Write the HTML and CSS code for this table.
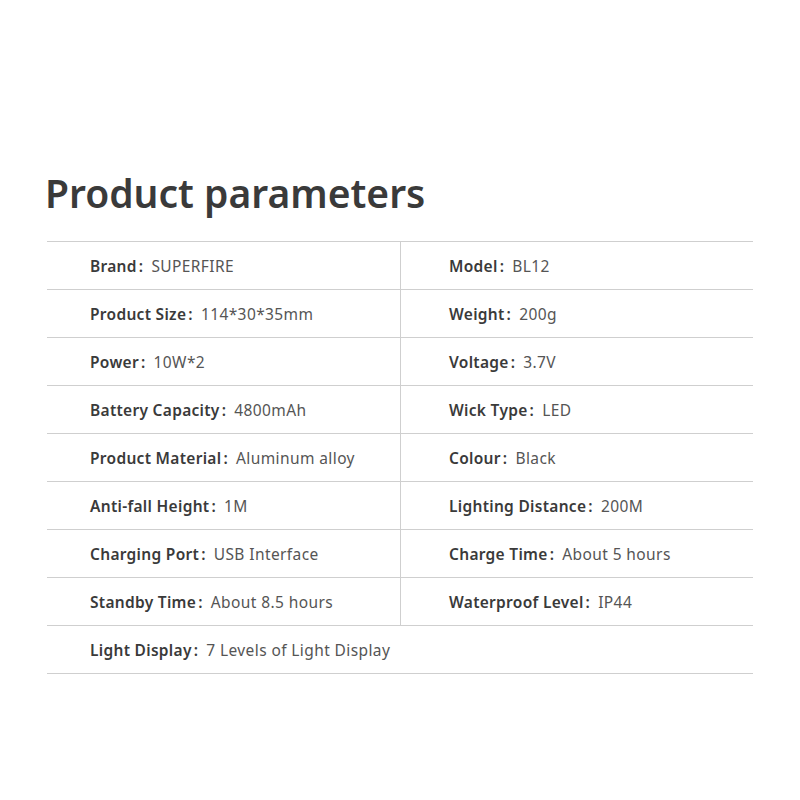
FILE: index.html
```html
<!DOCTYPE html>
<html>
<head>
<meta charset="utf-8">
<link rel="stylesheet" href="styles.css">
</head>
<body>
<div class="page">
  <h1 class="title">Product parameters</h1>
  <div class="table">
    <div class="row">
      <div class="cell"><span class="k">Brand<span class="c">:</span></span><span class="v">SUPERFIRE</span></div>
      <div class="cell right"><span class="k">Model<span class="c">:</span></span><span class="v">BL12</span></div>
    </div>
    <div class="row">
      <div class="cell"><span class="k">Product Size<span class="c">:</span></span><span class="v">114*30*35mm</span></div>
      <div class="cell right"><span class="k">Weight<span class="c">:</span></span><span class="v">200g</span></div>
    </div>
    <div class="row">
      <div class="cell"><span class="k">Power<span class="c">:</span></span><span class="v">10W*2</span></div>
      <div class="cell right"><span class="k">Voltage<span class="c">:</span></span><span class="v">3.7V</span></div>
    </div>
    <div class="row">
      <div class="cell"><span class="k">Battery Capacity<span class="c">:</span></span><span class="v">4800mAh</span></div>
      <div class="cell right"><span class="k">Wick Type<span class="c">:</span></span><span class="v">LED</span></div>
    </div>
    <div class="row">
      <div class="cell"><span class="k">Product Material<span class="c">:</span></span><span class="v">Aluminum alloy</span></div>
      <div class="cell right"><span class="k">Colour<span class="c">:</span></span><span class="v">Black</span></div>
    </div>
    <div class="row">
      <div class="cell"><span class="k">Anti-fall Height<span class="c">:</span></span><span class="v">1M</span></div>
      <div class="cell right"><span class="k">Lighting Distance<span class="c">:</span></span><span class="v">200M</span></div>
    </div>
    <div class="row">
      <div class="cell"><span class="k">Charging Port<span class="c">:</span></span><span class="v">USB Interface</span></div>
      <div class="cell right"><span class="k">Charge Time<span class="c">:</span></span><span class="v">About 5 hours</span></div>
    </div>
    <div class="row">
      <div class="cell"><span class="k">Standby Time<span class="c">:</span></span><span class="v">About 8.5 hours</span></div>
      <div class="cell right"><span class="k">Waterproof Level<span class="c">:</span></span><span class="v">IP44</span></div>
    </div>
    <div class="row single">
      <div class="cell"><span class="k">Light Display<span class="c">:</span></span><span class="v">7 Levels of Light Display</span></div>
    </div>
  </div>
</div>
</body>
</html>
```

FILE: styles.css
```css
html, body {
  margin: 0;
  padding: 0;
  background: #ffffff;
}
.page {
  width: 800px;
  height: 800px;
  padding: 165px 47px 0 47px;
  box-sizing: border-box;
  font-family: "Noto Sans", "Open Sans", sans-serif;
}
.title {
  margin: 0 0 20px -2px;
  font-size: 39px;
  line-height: 56px;
  font-weight: 600;
  color: #3a3a3a;
  letter-spacing: 0;
}
.table {
  border-top: 1px solid #cfcfcf;
}
.row {
  display: grid;
  grid-template-columns: 353px 1fr;
  height: 48px;
  border-bottom: 1px solid #cfcfcf;
  box-sizing: border-box;
}
.row.single {
  grid-template-columns: 1fr;
}
.cell {
  display: flex;
  align-items: center;
  padding-left: 43px;
  white-space: nowrap;
  font-size: 15.5px;
  line-height: 22px;
}
.cell.right {
  border-left: 1px solid #cfcfcf;
  padding-left: 48px;
}
.k {
  font-weight: 600;
  color: #3a3a3a;
  letter-spacing: 0.3px;
}
.c {
  margin-left: 2px;
}
.v {
  margin-left: 8px;
  letter-spacing: 0.4px;
  color: #555555;
}
```
